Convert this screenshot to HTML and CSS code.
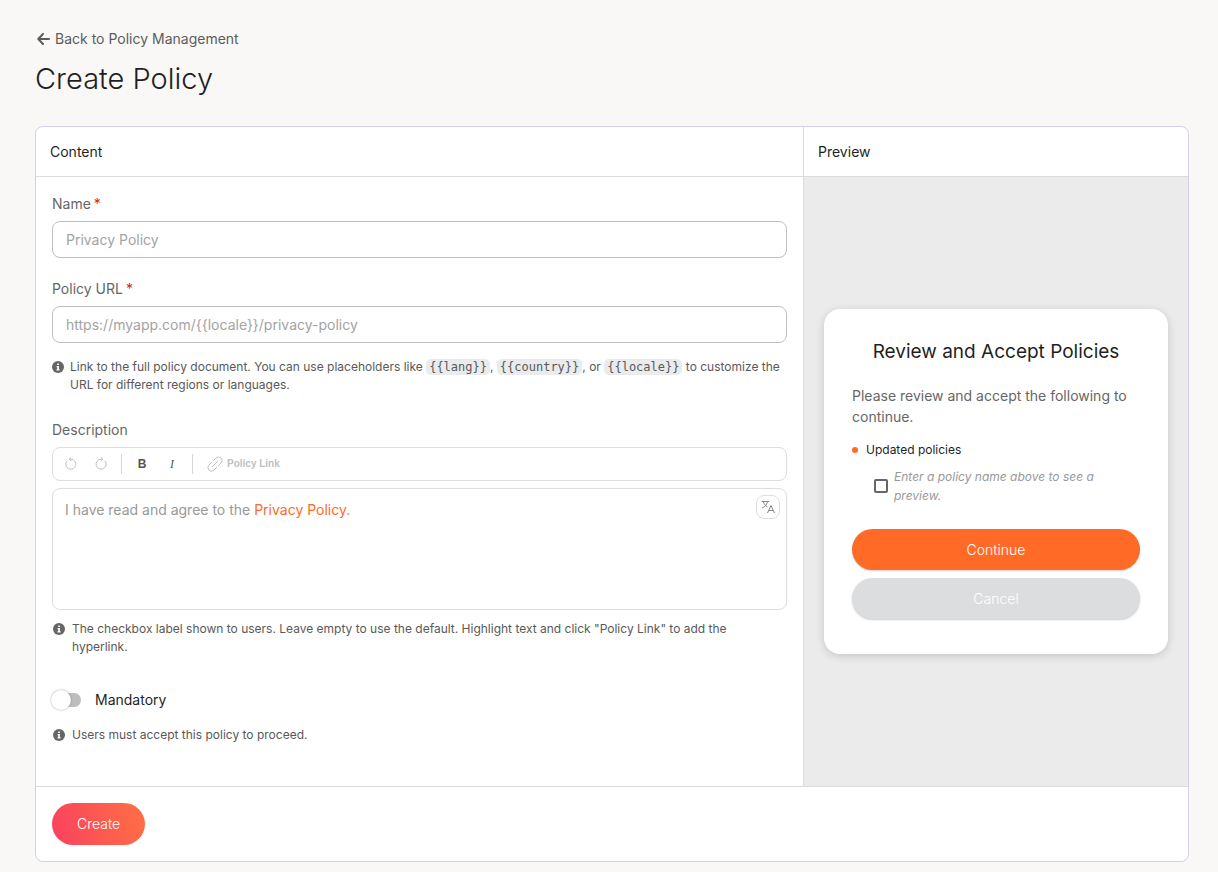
FILE: index.html
```html
<!DOCTYPE html>
<html lang="en">
<head>
    <meta charset="UTF-8">
    <meta name="viewport" content="width=device-width, initial-scale=1.0">
    <title>Create Policy</title>
    <link rel="stylesheet" href="styles.css">
</head>
<body>

    <svg class="symbols" aria-hidden="true">
        <symbol id="info" viewBox="0 0 12 12">
            <circle cx="6" cy="6" r="6" fill="currentColor"/>
            <path d="M5.2 2.4h1.7V4H5.2zM4.6 5h2.3v3.2h.7v1.2H4.5V8.2h.7v-2h-.6z" fill="#fff"/>
        </symbol>
    </svg>

    <header class="page-header">
        <a href="#" class="back-link">
            <svg width="13" height="12" viewBox="0 0 13 12" fill="none" stroke="currentColor" stroke-width="2" stroke-linecap="round" stroke-linejoin="round"><path d="M6 1 1.300 6 6 11M1.500 6H12"/></svg>
            Back to Policy Management
        </a>
        <h1>Create Policy</h1>
    </header>

    <form class="card">
        <div class="columns">
            <section class="content">
                <h2 class="column-title">Content</h2>
                <div class="fields">
                    <div class="field">
                        <label for="name">Name<span class="required">*</span></label>
                        <input type="text" id="name" class="text-input" placeholder="Privacy Policy" required>
                    </div>

                    <div class="field">
                        <label for="url">Policy URL<span class="required">*</span></label>
                        <input type="text" id="url" class="text-input" placeholder="https://myapp.com/{{locale}}/privacy-policy" required>
                        <div class="hint">
                            <svg class="info-icon"><use href="#info"/></svg>
                            <p>Link to the full policy document. You can use placeholders like <code>{{lang}}</code>, <code>{{country}}</code>, or <code>{{locale}}</code> to customize the URL for different regions or languages.</p>
                        </div>
                    </div>

                    <div class="field description">
                        <span class="label" id="description-label">Description</span>
                        <div class="toolbar">
                            <button type="button" class="tool muted" aria-label="Undo">
                                <svg width="14" height="14" viewBox="0 0 14 14" fill="none" stroke="currentColor"><path d="M3.200 3.800a5 5 0 1 0 3.800-1.600H5.500M7.200.3 5.200 2.200l2 1.900"/></svg>
                            </button>
                            <button type="button" class="tool muted" aria-label="Redo">
                                <svg width="14" height="14" viewBox="0 0 14 14" fill="none" stroke="currentColor"><path d="M10.800 3.800a5 5 0 1 1-3.800-1.600h1.500M6.800.3l2 1.900-2 1.900"/></svg>
                            </button>
                            <span class="divider"></span>
                            <button type="button" class="tool bold">B</button>
                            <button type="button" class="tool italic">I</button>
                            <span class="divider"></span>
                            <button type="button" class="tool link-tool muted">
                                <svg width="16" height="16" viewBox="0 0 24 24" fill="none" stroke="currentColor" stroke-width="1.500" stroke-linecap="round"><path d="M8 16l8-8M9.500 7l4-4a4.900 4.900 0 0 1 7.500 7.500l-4 4M14.500 17l-4 4A4.900 4.900 0 0 1 3 13.500l4-4"/></svg>
                                Policy Link
                            </button>
                        </div>
                        <div class="editor">
                            <div class="editor-text" contenteditable="true" role="textbox" aria-labelledby="description-label">I have read and agree to the <a href="#">Privacy Policy</a>.</div>
                            <button type="button" class="translate" aria-label="Translate">
                                <svg width="14" height="14" viewBox="0 0 14 14" fill="none" stroke="currentColor"><path d="M.5 1.500h7.500M2.300 1.500c.6 2.500 2.200 4.500 4.200 5.500M6.500 1.500C6 4.500 4 7 1 8M6.500 13 10 5.500l3.500 7.500M7.700 10.500h4.600"/></svg>
                            </button>
                        </div>
                        <div class="hint">
                            <svg class="info-icon"><use href="#info"/></svg>
                            <p>The checkbox label shown to users. Leave empty to use the default. Highlight text and click "Policy Link" to add the hyperlink.</p>
                        </div>
                    </div>

                    <div class="mandatory">
                        <label class="switch-row" for="mandatory">
                            <input type="checkbox" id="mandatory" class="switch">
                            Mandatory
                        </label>
                        <div class="hint">
                            <svg class="info-icon"><use href="#info"/></svg>
                            <p>Users must accept this policy to proceed.</p>
                        </div>
                    </div>
                </div>
            </section>

            <section class="preview">
                <h2 class="column-title">Preview</h2>
                <div class="stage">
                    <div class="dialog">
                        <h3>Review and Accept Policies</h3>
                        <p class="intro">Please review and accept the following to continue.</p>
                        <p class="updated">Updated policies</p>
                        <label class="policy" for="accept">
                            <input type="checkbox" id="accept" class="checkbox">
                            <em>Enter a policy name above to see a preview.</em>
                        </label>
                        <button type="button" class="btn continue">Continue</button>
                        <button type="button" class="btn cancel">Cancel</button>
                    </div>
                </div>
            </section>
        </div>

        <footer class="card-footer">
            <button type="submit" class="create">Create</button>
        </footer>
    </form>

</body>
</html>
```
FILE: styles.css
```css
* {
    margin: 0;
    padding: 0;
    box-sizing: border-box;
}

body {
    padding: 28px 29px 9px 35px;
    background: #f9f8f7;
    color: #1f1f1f;
    font-family: Inter, "Liberation Sans", sans-serif;
    font-size: 14px;
    line-height: 22px;
}

button,
input {
    font: inherit;
}

button {
    border: none;
    background: none;
    cursor: pointer;
}

.symbols {
    display: none;
}

.page-header {
    margin-bottom: 28px;
}

.back-link {
    display: flex;
    align-items: center;
    gap: 5px;
    padding-left: 2px;
    color: #5c5c5c;
    text-decoration: none;
}

.page-header h1 {
    margin-top: 10px;
    font-size: 29px;
    font-weight: 300;
    line-height: 38px;
}

.card {
    overflow: hidden;
    border: 1px solid #d3d1e3;
    border-radius: 8px;
    background: #fff;
}

.columns {
    display: grid;
    grid-template-columns: 2fr 1fr;
}

.content,
.preview {
    display: flex;
    flex-direction: column;
}

.content {
    border-right: 1px solid #dcdcdf;
}

.column-title {
    padding: 14px;
    border-bottom: 1px solid #dcdcdf;
    font-size: 14px;
    font-weight: 400;
    line-height: 21px;
}

.fields {
    padding: 16px 16px 42px;
}

.field {
    margin-bottom: 20px;
}

.field label,
.label {
    display: block;
    margin-bottom: 6px;
    color: #666;
}

.required {
    margin-left: 3px;
    color: #e02020;
}

.text-input {
    display: block;
    width: 100%;
    height: 37px;
    padding: 0 13px;
    border: 1px solid #bfbfbf;
    border-radius: 8px;
    background: #fff;
    color: #1f1f1f;
}

.text-input::placeholder {
    color: #a3a3a3;
    opacity: 1;
}

.hint {
    display: flex;
    gap: 6px;
    margin-top: 15px;
    color: #595959;
    font-size: 12px;
    line-height: 18px;
}

.info-icon {
    flex: none;
    width: 12px;
    height: 12px;
    margin-top: 3px;
    color: #666;
}

.hint code {
    padding: 1px 3px;
    border-radius: 5px;
    background: #e9ebec;
    font-family: "DejaVu Sans Mono", monospace;
    font-size: 12px;
}

.description {
    margin-top: 25px;
    margin-bottom: 33px;
}

.toolbar {
    display: flex;
    align-items: center;
    height: 34px;
    margin-bottom: 7px;
    padding: 0 3px;
    border: 1px solid #dedede;
    border-radius: 8px;
}

.tool {
    display: flex;
    align-items: center;
    justify-content: center;
    width: 30px;
    height: 26px;
    color: #555;
    font-size: 12px;
}

.tool.muted {
    color: #bfbfbf;
}

.bold {
    font-family: "Liberation Sans", sans-serif;
    font-weight: 700;
}

.italic {
    font-family: "Liberation Serif", serif;
    font-style: italic;
}

.divider {
    width: 1px;
    height: 20px;
    margin: 0 5px;
    background: #d6d6d6;
}

.link-tool {
    gap: 4px;
    width: auto;
    padding: 0 9px;
    font-family: "Liberation Sans", sans-serif;
    font-size: 10px;
    font-weight: 700;
}

.editor {
    display: flex;
    align-items: flex-start;
    gap: 12px;
    min-height: 122px;
    padding: 6px 6px 6px 12px;
    border: 1px solid #dedede;
    border-radius: 8px;
}

.editor-text {
    flex: 1;
    padding-top: 4px;
    color: #999;
    outline: none;
}

.editor-text a {
    color: #ff6b26;
    text-decoration: none;
}

.translate {
    display: flex;
    align-items: center;
    justify-content: center;
    width: 24px;
    height: 24px;
    border: 1px solid #dedede;
    border-radius: 8px;
    color: #888;
}

.description .hint,
.mandatory .hint {
    gap: 7px;
    margin-top: 10px;
    padding-left: 1px;
    padding-right: 16px;
}

.switch-row {
    display: flex;
    align-items: center;
    gap: 14px;
}

.switch {
    display: flex;
    align-items: center;
    width: 29px;
    height: 14px;
    appearance: none;
    border-radius: 7px;
    background: #bdbdbd;
    cursor: pointer;
}

.switch::before {
    content: "";
    width: 20px;
    height: 20px;
    margin-left: -1px;
    border-radius: 50%;
    background: #fff;
    box-shadow: 0 0 2px rgba(0, 0, 0, 0.4);
}

.switch:checked {
    justify-content: flex-end;
    background: #ff6b26;
}

.mandatory .hint {
    margin-top: 15px;
}

.stage {
    display: flex;
    flex: 1;
    align-items: center;
    padding: 20px;
    background: #ebebeb;
}

.dialog {
    flex: 1;
    padding: 28px 28px 35px;
    border-radius: 16px;
    background: #fff;
    box-shadow: 0 2px 8px rgba(0, 0, 0, 0.16);
}

.dialog h3 {
    margin-bottom: 18px;
    font-size: 19px;
    font-weight: 400;
    line-height: 30px;
    text-align: center;
}

.intro {
    margin-bottom: 14px;
    color: #666;
    line-height: 21px;
}

.updated {
    display: flex;
    align-items: center;
    gap: 8px;
    margin-bottom: 8px;
    font-size: 12px;
    line-height: 18px;
}

.updated::before {
    content: "";
    width: 6px;
    height: 6px;
    border-radius: 50%;
    background: #ff6b26;
}

.policy {
    display: flex;
    align-items: center;
    gap: 6px;
    margin-bottom: 24px;
    padding-left: 22px;
    color: #999;
    font-size: 12px;
    line-height: 19px;
}

.checkbox {
    flex: none;
    width: 14px;
    height: 14px;
    appearance: none;
    border: 2px solid #666;
    border-radius: 2px;
}

.checkbox:checked {
    background: #ff6b26;
}

.btn {
    display: block;
    width: 100%;
    height: 41px;
    border-radius: 21px;
    color: #fff;
    font-weight: 300;
    box-shadow: 0 1px 2px rgba(0, 0, 0, 0.2);
}

.continue {
    margin-bottom: 8px;
    background: #ff6b26;
}

.cancel {
    background: #dcddde;
}

.card-footer {
    padding: 16px;
    border-top: 1px solid #dcdcdf;
}

.create {
    height: 42px;
    padding: 0 25px;
    border-radius: 21px;
    background: linear-gradient(75deg, #f9415f, #ff7043);
    color: #fff;
    font-weight: 300;
}
```
